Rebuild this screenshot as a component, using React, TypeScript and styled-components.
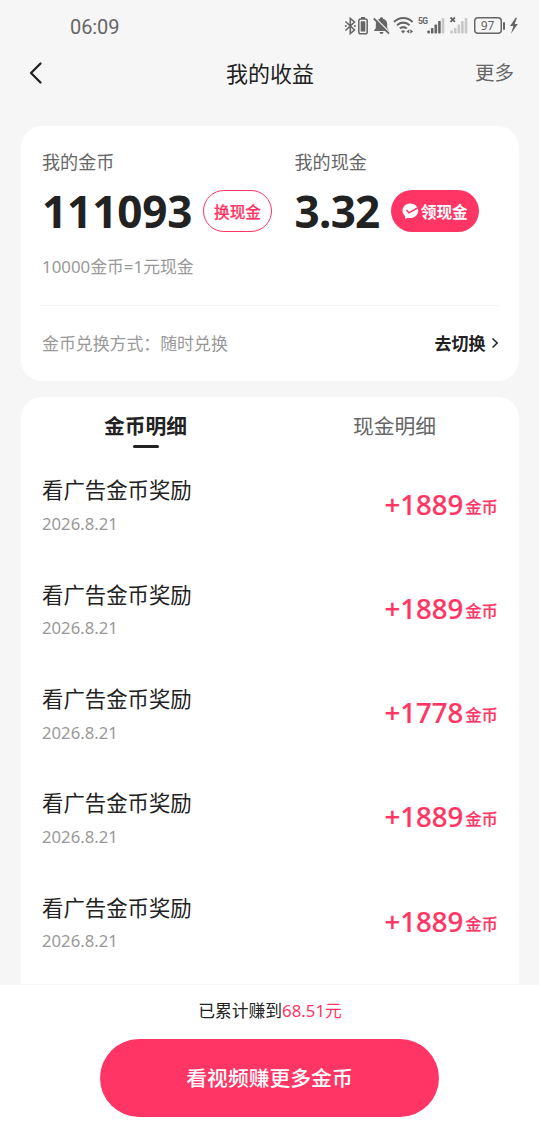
import React from 'react';
import styled, { createGlobalStyle } from 'styled-components';

const PINK = '#ff3665';
const INK = '#222222';

const GlobalStyle = createGlobalStyle`
  * { box-sizing: border-box; }
  body {
    margin: 0;
    background: #f6f6f6;
    font-family: "Noto Sans", "Noto Sans CJK SC", sans-serif;
    color: ${INK};
  }
  button {
    font-family: inherit;
    border: 0;
    padding: 0;
    margin: 0;
    background: none;
    cursor: pointer;
  }
`;

const Page = styled.div`
  width: 100%;
  max-width: 539px;
  height: 1136px;
  display: flex;
  flex-direction: column;
  overflow: hidden;
  background: #f6f6f6;
`;

const StatusBar = styled.div`
  height: 50px;
  flex: none;
  display: flex;
  justify-content: space-between;
  padding: 13px 21px 0 70px;
  color: #666;
`;

const Clock = styled.span`
  font-family: Roboto, "Noto Sans", sans-serif;
  font-size: 20px;
  line-height: 28px;
  letter-spacing: -0.1px;
`;

const StatusIcons = styled.div`
  display: flex;
  align-items: flex-start;
`;

const StatusIcon = styled.svg<{ $gap?: number }>`
  display: block;
  flex: none;
  height: 26px;
  margin-left: ${(p) => p.$gap ?? 0}px;
  overflow: visible;
`;

const Header = styled.header`
  height: 76px;
  flex: none;
  display: grid;
  grid-template-columns: 1fr auto 1fr;
  align-items: start;
  padding: 7px 25px 0 26px;
`;

const BackButton = styled.button`
  width: 14px;
  height: 30px;
  margin: 1px 0 0 3px;
  svg { display: block; }
`;

const Title = styled.h1`
  margin: 0;
  font-size: 22px;
  font-weight: 400;
  line-height: 32px;
`;

const More = styled.button`
  justify-self: end;
  margin-top: 2px;
  font-size: 19.5px;
  line-height: 28px;
  color: #666;
`;

const Card = styled.section<{ $fill?: boolean }>`
  margin: 0 20px 0 21px;
  background: #fff;
  border-radius: ${(p) => (p.$fill ? '21px 21px 0 0' : '21px')};
  ${(p) => (p.$fill ? 'flex: 1; min-height: 0; overflow: hidden;' : 'flex: none; height: 255px; margin-bottom: 16px;')}
`;

const Balances = styled.div`
  display: grid;
  grid-template-columns: 252.5px 1fr;
  padding: 23px 0 0 21px;
`;

const Label = styled.div`
  font-size: 18.1px;
  line-height: 26px;
  color: #666;
`;

const BalanceLine = styled.div`
  display: flex;
  align-items: center;
  height: 42px;
  margin-top: 15px;
`;

const Figure = styled.strong<{ $width: number; $tight?: boolean }>`
  width: ${(p) => p.$width}px;
  font-size: 44px;
  font-weight: 700;
  line-height: 42px;
  letter-spacing: ${(p) => (p.$tight ? '-0.7px' : '-0.1px')};
  white-space: nowrap;
`;

const Pill = styled.button<{ $solid?: boolean }>`
  display: flex;
  align-items: center;
  justify-content: center;
  gap: 2px;
  width: ${(p) => (p.$solid ? 87.5 : 69)}px;
  height: 42px;
  padding-top: 1px;
  border-radius: 21px;
  border: ${(p) => (p.$solid ? '0' : `1.5px solid ${PINK}`)};
  background: ${(p) => (p.$solid ? PINK : '#fff')};
  color: ${(p) => (p.$solid ? '#fff' : PINK)};
  font-size: 15.7px;
  font-weight: ${(p) => (p.$solid ? 700 : 500)};
  -webkit-text-stroke: ${(p) => (p.$solid ? 0 : 0.2)}px currentColor;
  line-height: 24px;
`;

const Hint = styled.div`
  padding: 23px 21px 0;
  font-size: 16.85px;
  line-height: 24px;
  color: #999;
`;

const Divider = styled.div`
  height: 1px;
  margin: 26px 20px 0 19px;
  background: #f4f4f4;
`;

const ExchangeRow = styled.div`
  display: flex;
  justify-content: space-between;
  align-items: center;
  height: 73px;
  padding: 0 20px 0 21px;
  font-size: 16.9px;
  color: #999;
`;

const SwitchLink = styled.button`
  display: flex;
  align-items: center;
  gap: 5.5px;
  font-size: 17px;
  font-weight: 700;
  color: ${INK};
`;

const Tabs = styled.div`
  display: grid;
  grid-template-columns: 1fr 1fr;
  height: 57px;
  padding-top: 14px;
`;

const Tab = styled.button<{ $active?: boolean }>`
  display: flex;
  flex-direction: column;
  align-items: center;
  font-size: 20.8px;
  line-height: 30px;
  font-weight: ${(p) => (p.$active ? 700 : 400)};
  color: ${(p) => (p.$active ? INK : '#666')};
  &::after {
    content: '';
    width: 26px;
    height: 2.5px;
    margin-top: 4px;
    border-radius: 2px;
    background: ${(p) => (p.$active ? INK : 'transparent')};
  }
`;

const Entry = styled.div`
  display: flex;
  justify-content: space-between;
  height: 104.3px;
  padding: 20.4px 21px 0 21px;
`;

const EntryTitle = styled.div`
  font-size: 21.4px;
  line-height: 32px;
`;

const EntryDate = styled.div`
  margin-top: 4.6px;
  font-size: 16.7px;
  line-height: 26px;
  color: #999;
`;

const Amount = styled.div`
  display: flex;
  align-items: baseline;
  gap: 2px;
  height: 40px;
  margin-top: 10.2px;
  color: ${PINK};
  font-size: 27.5px;
  font-weight: 500;
  line-height: 40px;
  -webkit-text-stroke: 0.2px currentColor;
`;

const Unit = styled.span`
  position: relative;
  top: -2px;
  font-size: 16.4px;
  font-weight: 500;
`;

const Footer = styled.footer`
  flex: none;
  height: 152px;
  display: flex;
  flex-direction: column;
  align-items: center;
  border-top: 1px solid #f4f4f4;
  background: #fff;
  padding: 14px 0 0 1px;
`;

const Total = styled.div`
  font-size: 16.8px;
  line-height: 24px;
  span { color: ${PINK}; }
`;

const WatchButton = styled.button`
  width: 339px;
  height: 78px;
  margin: 16px 1px 0 0;
  border-radius: 39px;
  background: ${PINK};
  color: #fff;
  font-size: 20.8px;
  font-weight: 500;
  line-height: 30px;
`;

const Bluetooth = () => (
  <StatusIcon width="11" viewBox="0 0 11 26">
    <path d="M0.500 8.500L9.500 17L5.300 20.600V5.400L9.500 9L0.500 17.500" fill="none" stroke="#666" strokeWidth="1.600" />
    <circle cx="0.800" cy="13" r="1" fill="#666" />
    <circle cx="10" cy="13" r="1" fill="#666" />
  </StatusIcon>
);

const DeviceBattery = () => (
  <StatusIcon $gap={2} width="10" viewBox="0 0 10 26">
    <rect x="3" y="4" width="4" height="2" fill="#666" />
    <rect x="0.8" y="6" width="8.4" height="14.8" rx="1.8" fill="none" stroke="#666" strokeWidth="1.5" />
    <rect x="2.7" y="8.3" width="4.6" height="10.2" fill="#666" />
  </StatusIcon>
);

const MutedBell = () => (
  <StatusIcon $gap={5.5} width="17" viewBox="0 0 17 26">
    <path d="M8.500 4.200c1 0 1.600.6 1.600 1.500 2.600.7 4.100 2.700 4.100 5.300v4l2 3H.8l2-3v-4C2.800 8.400 4.300 6.400 6.900 5.700c0-.9.600-1.500 1.600-1.500zM6.500 19h4a2 2 0 0 1-4 0z" fill="#666" />
    <path d="M2.100 4.800L17 19.700" stroke="#f6f6f6" strokeWidth="1.300" />
    <path d="M0.800 5.500L16 20.700" stroke="#666" strokeWidth="1.800" />
  </StatusIcon>
);

const Wifi = () => (
  <StatusIcon $gap={3} width="21" viewBox="0 0 21 26">
    <g fill="none" stroke="#666" strokeWidth="2.100">
      <path d="M1 9C6.400 3.700 14.200 3.700 19.600 9" />
      <path d="M4 12.300c3.700-3.600 8.900-3.600 12.600 0" />
      <path d="M6.900 15.600c2-2 4.800-2 6.800 0" />
    </g>
    <path d="M8 18q2.100-1.700 4.200 0L10.100 20.600z" fill="#666" />
    <path d="M16.300 16.200v4.400l-2.900-2.200zM17.300 16.200v4.400l2.900-2.200z" fill="#666" />
  </StatusIcon>
);

const NetworkTag = styled.span`
  width: 9px;
  margin: 3px 0 0 4px;
  font-family: Roboto, sans-serif;
  font-size: 8.5px;
  font-weight: 700;
  line-height: 10px;
  letter-spacing: -0.6px;
`;

const Signal = ({ none }: { none?: boolean }) => (
  <StatusIcon $gap={none ? 6 : -0.5} width={none ? 18 : 17} viewBox={none ? '0 0 18 26' : '0 0 17 26'}>
    {none && <path d="M0.500 4.500l4.400 4.400M4.900 4.500L0.500 8.900" stroke="#666" strokeWidth="1.800" />}
    {[0, 1, 2, 3, 4].map((i) => {
      const h = [3, 5.5, 9, 12.5, 15.5][i];
      return (
        <rect
          key={i}
          x={0.3 + i * 3.6}
          y={20.5 - h}
          width="2.6"
          height={h}
          rx="0.7"
          fill={none || i === 4 ? '#c8c8c8' : '#666'}
        />
      );
    })}
  </StatusIcon>
);

const BatteryBox = styled.span`
  width: 28px;
  height: 17px;
  margin: 4px 0 0 6px;
  box-shadow: inset 0 0 0 1.5px #666;
  border-radius: 4px;
  font-size: 12px;
  line-height: 17px;
  text-align: center;
`;

const BatteryTip = styled.span`
  width: 2px;
  height: 8px;
  margin: 9px 0 0 1.5px;
  border-radius: 1px;
  background: #666;
`;

const Bolt = () => (
  <StatusIcon $gap={5} width="8" viewBox="0 0 8 26">
    <path d="M5.600 4.800L0 13h3.400L1 20.800L7.800 11H4.700L7 4.800z" fill="#666" />
  </StatusIcon>
);

const BackArrow = () => (
  <svg width="14" height="30" viewBox="0 0 14 30">
    <path d="M11.500 5.500L2 15l9.500 9.500" fill="none" stroke={INK} strokeWidth="2.300" strokeLinecap="round" strokeLinejoin="round" />
  </svg>
);

const PayMark = () => (
  <svg width="17" height="17" viewBox="0 0 17 17">
    <path d="M8.300.6C3.900.6.500 3.800.500 7.800c0 2.200 1 4.100 2.700 5.500L3 16l2.700-1.300c.8.200 1.700.4 2.600.4 4.400 0 7.900-3.300 7.900-7.300S12.700.6 8.300.6z" fill="#fff" />
    <path d="M4.500 6.900l2.300 2.900L15.600 5" fill="none" stroke={PINK} strokeWidth="1.500" strokeLinejoin="round" />
  </svg>
);

const Chevron = () => (
  <svg width="8" height="12" viewBox="0 0 8 12">
    <path d="M1.500 1.500L6.200 6L1.500 10.500" fill="none" stroke={INK} strokeWidth="1.500" />
  </svg>
);

const entries = [1889, 1889, 1778, 1889, 1889];

export default function App() {
  return (
    <Page>
      <GlobalStyle />
      <StatusBar>
        <Clock>06:09</Clock>
        <StatusIcons>
          <Bluetooth />
          <DeviceBattery />
          <MutedBell />
          <Wifi />
          <NetworkTag>5G</NetworkTag>
          <Signal />
          <Signal none />
          <BatteryBox>97</BatteryBox>
          <BatteryTip />
          <Bolt />
        </StatusIcons>
      </StatusBar>
      <Header>
        <BackButton aria-label="返回">
          <BackArrow />
        </BackButton>
        <Title>我的收益</Title>
        <More>更多</More>
      </Header>
      <Card>
        <Balances>
          <div>
            <Label>我的金币</Label>
            <BalanceLine>
              <Figure $width={161}>111093</Figure>
              <Pill>换现金</Pill>
            </BalanceLine>
          </div>
          <div>
            <Label>我的现金</Label>
            <BalanceLine>
              <Figure $width={96.5} $tight>3.32</Figure>
              <Pill $solid>
                <PayMark />
                领现金
              </Pill>
            </BalanceLine>
          </div>
        </Balances>
        <Hint>10000金币=1元现金</Hint>
        <Divider />
        <ExchangeRow>
          <span>金币兑换方式：随时兑换</span>
          <SwitchLink>
            去切换
            <Chevron />
          </SwitchLink>
        </ExchangeRow>
      </Card>
      <Card $fill>
        <Tabs>
          <Tab $active>金币明细</Tab>
          <Tab>现金明细</Tab>
        </Tabs>
        {entries.map((amount, i) => (
          <Entry key={i}>
            <div>
              <EntryTitle>看广告金币奖励</EntryTitle>
              <EntryDate>2026.8.21</EntryDate>
            </div>
            <Amount>
              +{amount}
              <Unit>金币</Unit>
            </Amount>
          </Entry>
        ))}
      </Card>
      <Footer>
        <Total>
          已累计赚到<span>68.51元</span>
        </Total>
        <WatchButton>看视频赚更多金币</WatchButton>
      </Footer>
    </Page>
  );
}
